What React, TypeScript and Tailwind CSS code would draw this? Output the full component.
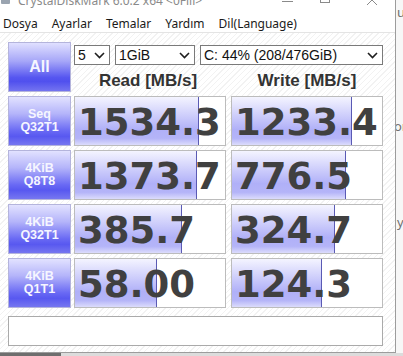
import React from "react";

const rows = [
  { l1: "Seq", l2: "Q32T1", r: "1534.3", rw: 124, w: "1233.4", ww: 120 },
  { l1: "4KiB", l2: "Q8T8", r: "1373.7", rw: 122, w: "776.5", ww: 114 },
  { l1: "4KiB", l2: "Q32T1", r: "385.7", rw: 107, w: "324.7", ww: 103 },
  { l1: "4KiB", l2: "Q1T1", r: "58.00", rw: 82, w: "124.3", ww: 90 },
];

function Chevron() {
  return (
    <svg width="11" height="7" viewBox="0 0 11 7" className="shrink-0">
      <polyline points="1,1 5.5,5.5 10,1" fill="none" stroke="#1e1e1e" strokeWidth="1.6" />
    </svg>
  );
}

function Select({ w, text }: { w: string; text: string }) {
  return (
    <div
      className={`${w} h-[20px] border border-[#7a7a7a] bg-white flex items-center justify-between pl-[3px] pr-[4px] text-[14px] leading-none text-[#111] font-['Liberation_Sans',sans-serif]`}
    >
      <span>{text}</span>
      <Chevron />
    </div>
  );
}

function Cell({ value, bar }: { value: string; bar: number }) {
  return (
    <div className="relative w-[152px] h-[50px] border border-[#bcbcbc] bg-white flex items-center">
      <div
        className="absolute left-0 top-0 bottom-0 border-r border-[#5a5ab4] bg-[linear-gradient(to_bottom,#f4f4ff_0%,#d6d6fc_30%,#b0b0f8_68%,#b4b4f8_86%,#dcdcfc_100%)]"
        style={{ width: `${bar}px` }}
      />
      <span className="relative pl-[3px] pt-[2px] font-['DejaVu_Sans',sans-serif] font-bold text-[37px] leading-none text-[#404040] whitespace-nowrap">
        {value}
      </span>
    </div>
  );
}

function Label({ a, b }: { a: string; b: string }) {
  return (
    <div className="w-[63px] h-[50px] border border-[#b4b4dc] bg-[linear-gradient(to_bottom,#e2e2ff_0%,#b4b4fa_35%,#6a6af4_70%,#5858f0_82%,#7676f0_100%)] flex flex-col items-center justify-center text-[12.5px] leading-[13.5px] font-bold text-[#f6f6ff] font-['Liberation_Sans',sans-serif]">
      <span>{a}</span>
      <span>{b}</span>
    </div>
  );
}

export default function App() {
  return (
    <div className="w-[403px] h-[356px] overflow-hidden flex flex-col bg-[#dedede]">
      <div className="flex h-[353px]">
        <div className="w-[396px] h-full border-r border-b border-[#9c9c9c] bg-white flex flex-col">
          {/* title bar (clipped) */}
          <div className="h-[8px] overflow-hidden shrink-0">
            <div className="mt-[-8px] h-[16px] flex items-center font-['Noto_Sans',sans-serif] text-[12px] leading-[16px] text-[#8a8a8a] relative">
              <div className="ml-[1px] w-[9px] h-[10px] mt-[-2px] bg-[#9aa4b0] rounded-[1px]" />
              <span className="ml-[8px] mt-[2px]">CrystalDiskMark 6.0.2 x64 &lt;0Fill&gt;</span>
              <div className="ml-auto flex items-center">
                <div className="w-[11px] h-[1px] bg-[#8a8a8a] mt-[2px]" />
                <div className="ml-[27px] w-[10px] h-[10px] border border-[#8a8a8a] mt-[-4px]" />
                <svg width="12" height="12" viewBox="0 0 12 12" className="ml-[36px] mr-[17px] mt-[-1px]">
                  <path d="M1 1 L11 11 M11 1 L1 11" stroke="#8a8a8a" strokeWidth="1" />
                </svg>
              </div>
            </div>
          </div>
          {/* menu */}
          <div className="h-[25px] shrink-0 border-b border-[#e4e4e4] pt-[8px] pl-[3px] flex gap-[14px] font-['Noto_Sans',sans-serif] text-[12px] leading-[16px] text-[#1a1a1a]">
            <span>Dosya</span>
            <span>Ayarlar</span>
            <span>Temalar</span>
            <span>Yardım</span>
            <span>Dil(Language)</span>
          </div>
          {/* content */}
          <div className="flex-1 pl-[8px] pt-[9px] bg-[repeating-linear-gradient(135deg,#ffffff_0px,#ffffff_3px,#f2f2f2_3px,#f2f2f2_4px)]">
            <div className="flex">
              <div className="w-[63px] h-[50px] border border-[#b4b4dc] bg-[linear-gradient(to_bottom,#e0e0ff_0%,#a6a6f8_38%,#5656f0_72%,#5050ee_80%,#7474f0_100%)] flex items-center justify-center text-[16px] font-bold text-[#f6f6ff] font-['Liberation_Sans',sans-serif]">
                All
              </div>
              <div className="ml-[3px] flex flex-col">
                <div className="mt-[3px] flex gap-[5px]">
                  <Select w="w-[36px]" text="5" />
                  <Select w="w-[80px]" text="1GiB" />
                  <Select w="w-[183px]" text="C: 44% (208/476GiB)" />
                </div>
                <div className="mt-[6px] flex font-['Liberation_Sans',sans-serif] font-bold text-[17px] leading-[20px] text-[#333]">
                  <div className="w-[152px] text-center pr-[4px]">Read [MB/s]</div>
                  <div className="ml-[5px] w-[152px] text-center">Write [MB/s]</div>
                </div>
              </div>
            </div>
            <div className="mt-[4px] flex flex-col gap-[4px]">
              {rows.map((r, i) => (
                <div key={i} className="flex">
                  <Label a={r.l1} b={r.l2} />
                  <div className="ml-[3px]">
                    <Cell value={r.r} bar={r.rw} />
                  </div>
                  <div className="ml-[5px]">
                    <Cell value={r.w} bar={r.ww} />
                  </div>
                </div>
              ))}
            </div>
            <div className="mt-[8px] w-[375px] h-[30px] border border-[#aaaaaa] bg-white" />
          </div>
        </div>
        {/* other window strip */}
        <div className="flex-1 bg-[#f7f7f7] flex flex-col pl-[1px] font-['Noto_Sans',sans-serif] text-[13px] leading-[16px] text-[#707070] overflow-hidden">
          <span className="mt-[4px]">u</span>
          <span className="mt-[98px] ml-[-3px]">or</span>
          <span className="mt-[80px]">y</span>
        </div>
      </div>
      <div className="h-[3px] flex">
        <div className="w-[61px] bg-[#6e6e6e]" />
        <div className="flex-1 bg-[#dcdcdc]" />
      </div>
    </div>
  );
}
